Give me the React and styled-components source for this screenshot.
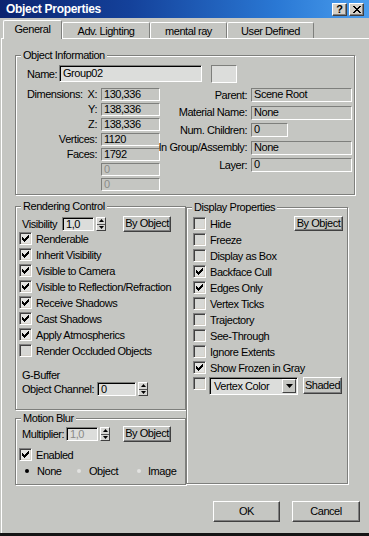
import React from 'react';
import styled, { createGlobalStyle } from 'styled-components';

const BG = '#c5c6c2';
const LIGHT = '#dcdddb';
const DARK = '#7e7f7c';
const FONT = `"Liberation Sans Narrow", "Arial Narrow", "Liberation Sans", Arial, sans-serif`;

const Global = createGlobalStyle`
  html, body { margin: 0; padding: 0; background: ${BG}; }
  body { font-family: ${FONT}; font-size: 11px; color: #000; }
  * { box-sizing: border-box; }
`;

const Win = styled.div`
  width: 369px;
  height: 536px;
  background: ${BG};
  display: flex;
  flex-direction: column;
  border-bottom: 3px solid #151515;
  overflow: hidden;
  font-size: 11px;
  letter-spacing: -0.45px;
`;

const TitleBar = styled.div`
  height: 18px;
  flex: none;
  display: flex;
  align-items: center;
  padding: 0 5px 0 6px;
  background: linear-gradient(90deg, #0b2470 0%, #14419a 35%, #2a78d4 75%, #4a9eee 100%);
`;

const Title = styled.span`
  flex: 1;
  color: #fff;
  font-weight: bold;
  font-size: 12px;
  letter-spacing: -0.3px;
`;

const TitleBtn = styled.div`
  width: 15px;
  height: 13px;
  background: #d4d0c8;
  border: 1px solid;
  border-color: #fff #404040 #404040 #fff;
  box-shadow: inset -1px -1px 0 #808080;
  display: flex;
  align-items: center;
  justify-content: center;
  font-family: "Liberation Sans", Arial, sans-serif;
  font-weight: bold;
  font-size: 11px;
  letter-spacing: 0;
  line-height: 1;
  & + & { margin-left: 2px; }
`;

const TabStrip = styled.div`
  height: 20px;
  flex: none;
  display: flex;
  align-items: flex-end;
  padding-left: 3px;
  position: relative;
  z-index: 1;
`;

const Tab = styled.div`
  width: ${p => p.$w}px;
  height: ${p => (p.$active ? 19 : 16)}px;
  margin-bottom: ${p => (p.$active ? -1 : 0)}px;
  padding-bottom: ${p => (p.$active ? 2 : 0)}px;
  background: ${BG};
  border-top: 1px solid #fff;
  border-left: 1px solid #fff;
  border-right: 1px solid ${DARK};
  border-radius: 2px 2px 0 0;
  display: flex;
  align-items: center;
  justify-content: center;
`;

const Panel = styled.div`
  flex: 1;
  margin-left: 1px;
  border-top: 1px solid #fff;
  border-left: 1px solid #fff;
  padding: 16px 0 0 13px;
  display: flex;
  flex-direction: column;
`;

const Group = styled.div`
  position: relative;
  flex: none;
  width: ${p => p.$w}px;
  height: ${p => p.$h}px;
  margin-top: ${p => p.$mt || 0}px;
  border: 1px solid ${DARK};
  box-shadow: inset 1px 1px 0 #fff, 1px 1px 0 #fff;
  padding: ${p => p.$pad};
  display: flex;
  flex-direction: column;
`;

const Legend = styled.span`
  position: absolute;
  top: -8px;
  left: 5px;
  padding: 0 2px;
  line-height: 14px;
  background: ${BG};
`;

/* ---------- Object information ---------- */
const NameRow = styled.div`
  display: flex;
  align-items: center;
  height: 17px;
`;

const NameLabel = styled.span`
  width: 32px;
`;

const NameInput = styled.div`
  width: 143px;
  height: 17px;
  background: ${LIGHT};
  border: 1px solid;
  border-color: ${DARK} #fff #fff ${DARK};
  box-shadow: inset 1px 1px 0 #000;
  padding-left: 3px;
  line-height: 15px;
`;

const Swatch = styled.div`
  width: 26px;
  height: 18px;
  margin-left: 9px;
  background: ${LIGHT};
  border: 1px solid;
  border-color: ${DARK} #fff #fff ${DARK};
`;

const InfoCols = styled.div`
  display: flex;
  margin-top: 6px;
`;

const LeftGrid = styled.div`
  width: 133px;
  display: grid;
  grid-template-columns: 70px 59px;
  column-gap: 4px;
  row-gap: 2px;
  grid-auto-rows: 13px;
`;

const RightGrid = styled.div`
  margin-left: 3px;
  display: grid;
  grid-template-columns: 84px 101px;
  column-gap: 4px;
  row-gap: 3.5px;
  grid-auto-rows: 14px;
`;

const Label = styled.span`
  display: flex;
  align-items: center;
  justify-content: ${p => (p.$split ? 'space-between' : 'flex-end')};
  line-height: 13px;
  white-space: nowrap;
`;

const Field = styled.div`
  width: ${p => (p.$w ? `${p.$w}px` : '100%')};
  height: 100%;
  border: 1px solid;
  border-color: ${DARK} #fff #fff ${DARK};
  padding-left: 2px;
  line-height: 11px;
  white-space: nowrap;
  overflow: hidden;
  color: ${p => (p.$disabled ? '#8a8b88' : '#000')};
`;

/* ---------- controls ---------- */
const Row = styled.div`
  display: flex;
  align-items: ${p => (p.$top ? 'flex-start' : 'center')};
  height: ${p => p.$h || 13}px;
  margin-top: ${p => p.$mt || 0}px;
  margin-left: ${p => p.$ml || 0}px;
  white-space: nowrap;
`;

const CtlLabel = styled.span`
  width: ${p => p.$w}px;
  flex: none;
`;

const SpinInput = styled.div`
  width: ${p => p.$w}px;
  height: 14px;
  background: ${LIGHT};
  border: 1px solid;
  border-color: ${DARK} #fff #fff ${DARK};
  box-shadow: inset 1px 1px 0 #000;
  padding-left: 3px;
  line-height: 12px;
  color: ${p => (p.$disabled ? '#8a8b88' : '#000')};
`;

const SpinBox = styled.div`
  width: 10px;
  height: 14px;
  margin-left: 2px;
  display: flex;
  flex-direction: column;
  background: #d6d6d3;
  border: 1px solid;
  border-color: #fff #404040 #404040 #fff;
`;

const SpinHalf = styled.div`
  flex: 1;
  display: flex;
  align-items: center;
  justify-content: center;
  & + & { border-top: 1px solid #555; }
`;

const Btn = styled.div`
  width: ${p => p.$w}px;
  height: ${p => p.$h}px;
  margin-left: ${p => p.$ml || 0};
  margin-right: ${p => p.$mr || 0}px;
  flex: none;
  background: ${BG};
  border: 1px solid;
  border-color: #fff #404040 #404040 #fff;
  box-shadow: inset -1px -1px 0 #808080;
  display: flex;
  align-items: center;
  justify-content: center;
  line-height: 1;
  padding-bottom: 1px;
  white-space: nowrap;
`;

const Box = styled.span`
  width: 13px;
  height: 13px;
  flex: none;
  margin-right: 4px;
  display: inline-flex;
  align-items: center;
  justify-content: center;
  border: 1px solid;
  border-color: #808080 #fff #fff #808080;
  box-shadow: inset 1px 1px 0 #404040, inset -1px -1px 0 #d4d0c8;
  background: ${p => (p.$on ? '#e4e4e2' : '#d7d8d5')};
`;

const CheckList = styled.div`
  display: flex;
  flex-direction: column;
  gap: 3px;
`;

const SubLabel = styled.div`
  line-height: 14px;
  margin-top: ${p => p.$mt}px;
  padding-left: 3px;
`;

const Dot = styled.span`
  width: 4px;
  height: 4px;
  border-radius: 50%;
  background: ${p => (p.$on ? '#000' : '#e2e2e0')};
  margin-right: ${p => p.$gap}px;
  flex: none;
`;

const RadioItem = styled.span`
  display: flex;
  align-items: center;
  width: ${p => (p.$w ? `${p.$w}px` : 'auto')};
`;

const Select = styled.div`
  width: 89px;
  height: 18px;
  margin-left: -1px;
  background: ${LIGHT};
  border: 1px solid;
  border-color: ${DARK} #fff #fff ${DARK};
  box-shadow: inset 1px 1px 0 #000;
  display: flex;
  align-items: center;
  padding: 0 1px 0 4px;
`;

const SelectText = styled.span`
  flex: 1;
`;

const SelectBtn = styled.div`
  width: 14px;
  height: 14px;
  background: ${BG};
  border: 1px solid;
  border-color: #fff #404040 #404040 #fff;
  display: flex;
  align-items: center;
  justify-content: center;
`;

const Lower = styled.div`
  display: flex;
  margin-top: 11px;
`;

const Col = styled.div`
  display: flex;
  flex-direction: column;
`;

const Footer = styled.div`
  display: flex;
  justify-content: flex-end;
  gap: 12px;
  margin-top: 16px;
  padding-right: 9px;
`;

/* ---------- small drawings ---------- */
const Check = () => (
  <svg width="7" height="7" viewBox="0 0 7 7" shapeRendering="crispEdges">
    <path
      fill="#000"
      d="M6 0h1v1h-1z M5 1h2v1h-2z M0 2h1v1h-1z M4 2h3v1h-3z M0 3h2v1h-2z M3 3h3v1h-3z M0 4h5v1h-5z M1 5h3v1h-3z M2 6h1v1h-1z"
    />
  </svg>
);

const CloseGlyph = () => (
  <svg width="8" height="7" viewBox="0 0 8 7" shapeRendering="crispEdges">
    <path
      fill="#000"
      d="M0 0h2v1h-2z M6 0h2v1h-2z M1 1h2v1h-2z M5 1h2v1h-2z M2 2h4v1h-4z M3 3h2v1h-2z M2 4h4v1h-4z M1 5h2v1h-2z M5 5h2v1h-2z M0 6h2v1h-2z M6 6h2v1h-2z"
    />
  </svg>
);

const Tri = ({ up, w = 5 }) => {
  const h = Math.ceil(w / 2);
  return (
    <svg width={w} height={h} viewBox={`0 0 ${w} ${h}`}>
      {up ? (
        <path fill="#000" d={`M0 ${h}L${w / 2} 0L${w} ${h}z`} />
      ) : (
        <path fill="#000" d={`M0 0L${w} 0L${w / 2} ${h}z`} />
      )}
    </svg>
  );
};

const Spinner = () => (
  <SpinBox>
    <SpinHalf><Tri up /></SpinHalf>
    <SpinHalf><Tri /></SpinHalf>
  </SpinBox>
);

const CheckItem = ({ on, children }) => (
  <Row>
    <Box $on={on}>{on && <Check />}</Box>
    <span>{children}</span>
  </Row>
);

const renderItems = [
  ['Renderable', true],
  ['Inherit Visibility', true],
  ['Visible to Camera', true],
  ['Visible to Reflection/Refraction', true],
  ['Receive Shadows', true],
  ['Cast Shadows', true],
  ['Apply Atmospherics', true],
  ['Render Occluded Objects', false],
];

const displayItems = [
  ['Freeze', false],
  ['Display as Box', false],
  ['Backface Cull', true],
  ['Edges Only', true],
  ['Vertex Ticks', false],
  ['Trajectory', false],
  ['See-Through', false],
  ['Ignore Extents', false],
  ['Show Frozen in Gray', true],
];

export default function App() {
  return (
    <>
      <Global />
      <Win>
        <TitleBar>
          <Title>Object Properties</Title>
          <TitleBtn>?</TitleBtn>
          <TitleBtn><CloseGlyph /></TitleBtn>
        </TitleBar>

        <TabStrip>
          <Tab $w={59} $active>General</Tab>
          <Tab $w={88}>Adv. Lighting</Tab>
          <Tab $w={77}>mental ray</Tab>
          <Tab $w={87}>User Defined</Tab>
        </TabStrip>

        <Panel>
          <Group $w={340} $h={140} $pad="9px 0 0 11px">
            <Legend>Object Information</Legend>
            <NameRow>
              <NameLabel>Name:</NameLabel>
              <NameInput>Group02</NameInput>
              <Swatch />
            </NameRow>
            <InfoCols>
              <LeftGrid>
                <Label $split><span>Dimensions:</span><span>X:</span></Label>
                <Field>130,336</Field>
                <Label>Y:</Label>
                <Field>138,336</Field>
                <Label>Z:</Label>
                <Field>138,336</Field>
                <Label>Vertices:</Label>
                <Field>1120</Field>
                <Label>Faces:</Label>
                <Field>1792</Field>
                <span />
                <Field $disabled>0</Field>
                <span />
                <Field $disabled>0</Field>
              </LeftGrid>
              <RightGrid>
                <Label>Parent:</Label>
                <Field>Scene Root</Field>
                <Label>Material Name:</Label>
                <Field>None</Field>
                <Label>Num. Children:</Label>
                <Field $w={37}>0</Field>
                <Label>In Group/Assembly:</Label>
                <Field>None</Field>
                <Label>Layer:</Label>
                <Field>0</Field>
              </RightGrid>
            </InfoCols>
          </Group>

          <Lower>
            <Col>
              <Group $w={171} $h={204} $pad="9px 0 0 3px">
                <Legend>Rendering Control</Legend>
                <Row $h={16} $ml={3}>
                  <CtlLabel $w={40}>Visibility</CtlLabel>
                  <SpinInput $w={32}>1,0</SpinInput>
                  <Spinner />
                  <Btn $w={48} $h={16} $ml="17px">By Object</Btn>
                </Row>
                <CheckList>
                  {renderItems.map(([t, on]) => (
                    <CheckItem key={t} on={on}>{t}</CheckItem>
                  ))}
                </CheckList>
                <SubLabel $mt={11}>G-Buffer</SubLabel>
                <Row $h={14} $ml={3}>
                  <CtlLabel $w={75}>Object Channel:</CtlLabel>
                  <SpinInput $w={39}>0</SpinInput>
                  <Spinner />
                </Row>
              </Group>

              <Group $w={171} $h={67} $mt={8} $pad="7px 0 0 3px">
                <Legend>Motion Blur</Legend>
                <Row $h={16} $ml={3}>
                  <CtlLabel $w={44}>Multiplier:</CtlLabel>
                  <SpinInput $w={32} $disabled>1,0</SpinInput>
                  <Spinner />
                  <Btn $w={48} $h={16} $ml="13px">By Object</Btn>
                </Row>
                <Row $mt={6}>
                  <Box $on><Check /></Box>
                  <span>Enabled</span>
                </Row>
                <Row $mt={3} $ml={6}>
                  <RadioItem $w={52}><Dot $on $gap={8} />None</RadioItem>
                  <RadioItem $w={60}><Dot $gap={8} />Object</RadioItem>
                  <RadioItem><Dot $gap={7} />Image</RadioItem>
                </Row>
              </Group>
            </Col>

            <Group $w={162} $h={277} $mt={1} $pad="9px 0 0 6px">
              <Legend>Display Properties</Legend>
              <CheckList>
                <Row>
                  <Box />
                  <span>Hide</span>
                  <Btn $w={49} $h={15} $ml="auto" $mr={4}>By Object</Btn>
                </Row>
                {displayItems.map(([t, on]) => (
                  <CheckItem key={t} on={on}>{t}</CheckItem>
                ))}
                <Row $top>
                  <Box />
                  <Select>
                    <SelectText>Vertex Color</SelectText>
                    <SelectBtn><Tri w={7} /></SelectBtn>
                  </Select>
                  <Btn $w={39} $h={17} $ml="5px">Shaded</Btn>
                </Row>
              </CheckList>
            </Group>
          </Lower>

          <Footer>
            <Btn $w={67} $h={21}>OK</Btn>
            <Btn $w={68} $h={21}>Cancel</Btn>
          </Footer>
        </Panel>
      </Win>
    </>
  );
}
